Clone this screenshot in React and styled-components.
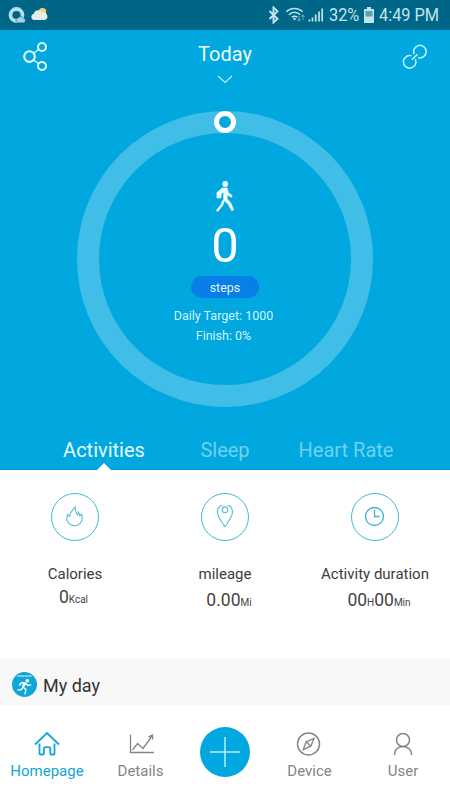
import { useState } from "react";
import styled, { createGlobalStyle } from "styled-components";

const GlobalStyle = createGlobalStyle`
    * {
        box-sizing: border-box;
    }
    body {
        margin: 0;
        background: #FFFFFF;
        font-family: Roboto, sans-serif;
        overflow: hidden;
    }
    svg {
        display: block;
        fill: none;
        flex-shrink: 0;
    }
    button {
        border: none;
        background: none;
        padding: 0;
        font-family: inherit;
    }
`

function StatusBar() {
    return (
        <Status>
            <svg width="48" height="18" viewBox="0 0 48 18">
                <circle cx="8.500" cy="9" r="6" stroke="#B5DDEB" strokeWidth="3.800" />
                <path d="M10 16.800a2.600 2.600 0 0 1 .3-5.100 3.400 3.400 0 0 1 5.400.6 2.300 2.300 0 0 1-.2 4.500z" fill="#A5D2E2" stroke="#006687" strokeWidth=".5" />
                <circle cx="34.500" cy="5.600" r="3.700" fill="#F2D860" />
                <path d="M26.500 14a3.200 3.200 0 0 1-.7-6.300 4.700 4.700 0 0 1 8.600-1.100 3.800 3.800 0 0 1 2.200 7.400z" fill="#E6EBED" />
            </svg>
            <StatusRight>
                <svg width="12" height="18" viewBox="0 0 12 18">
                    <path d="M1.500 5l8 7.700-4 3.800V1.500l4 3.700-8 7.800" stroke="#C0E4EF" strokeWidth="1.900" />
                </svg>
                <svg width="21" height="18" viewBox="0 0 21 18">
                    <path d="M1.500 5.800c4-4.500 12-4.500 16 0M4 8.700c3-3.300 8-3.300 11 0M6.800 11.300c1.500-1.500 4-1.500 5.400 0" stroke="#C0E4EF" strokeWidth="1.600" />
                    <circle cx="9.500" cy="13" r="1.200" fill="#C0E4EF" />
                    <path d="M14 10v5m-1.700-1.700L14 15l1.700-1.700M18 14V9m-1.700 1.700L18 9l1.700 1.700" stroke="#5FA3B9" strokeWidth="1.100" />
                </svg>
                <svg width="16" height="18" viewBox="0 0 16 18">
                    <path d="M1.500 15.500v-2M4.500 15.500v-4M7.700 15.500v-7M11 15.500v-10M14.200 15.500v-13" stroke="#C0E4EF" strokeWidth="1.700" />
                </svg>
                <StatusText $width={35}><span>32%</span></StatusText>
                <svg width="10" height="18" viewBox="0 0 10 18">
                    <path d="M3 1h4v2h3v14H0V3h3z" fill="#C0E4EF" />
                    <path d="M1.500 5h7v5.500h-7z" fill="#5F9FB2" />
                </svg>
                <StatusText $width={60}><span>4:49 PM</span></StatusText>
            </StatusRight>
        </Status>
    );
}

function Header() {
    return (
        <Top>
            <svg width="26" height="30" viewBox="0 0 26 30">
                <g stroke="#E2FAFF">
                    <circle cx="7.500" cy="14.600" r="5.300" strokeWidth="2.100" />
                    <circle cx="20" cy="5" r="4" strokeWidth="2" />
                    <circle cx="20" cy="24" r="4" strokeWidth="2" />
                    <path d="M11.500 11.300l5.300-3.900M11.500 18l5.300 3.700" strokeWidth="1.300" />
                </g>
            </svg>
            <Title>
                <span>Today</span>
                <svg width="16" height="9" viewBox="0 0 16 9">
                    <path d="M1 1l7 6.500L15 1" stroke="#BDF0FB" strokeWidth="1.200" />
                </svg>
            </Title>
            <svg width="26" height="30" viewBox="0 0 26 30">
                <g stroke="#C6F3FC" strokeWidth="1.500">
                    <path d="M12.200 12.300a6.300 6.300 0 1 1 4 3.400" />
                    <path d="M13.400 17.200a6.300 6.300 0 1 1-4-3.400" />
                    <path d="M9.800 17.700l5.800-5.400" />
                </g>
            </svg>
        </Top>
    );
}

function Progress() {
    return (
        <Ring>
            <Knob />
            <svg width="20" height="32" viewBox="-.7 -.5 20 32">
                <circle cx="9.500" cy="3.500" r="2.900" fill="#EDFCFF" />
                <path d="M6.500 7.500h5l1.300 4.800 3.700 2.700-.8 1.800-4.200-2.400v3.800l3.900 4.800 2.700 6.500-2.100.8-3.400-6.300-4.700-4.500V11.500l-2.300 1.700-.3 4.300H1.200V12z" fill="#EDFCFF" stroke="#EDFCFF" strokeWidth=".6" strokeLinejoin="round" />
                <path d="M7.700 20.500l-1.500 4-4.300 5.300" stroke="#EDFCFF" strokeWidth="2.400" strokeLinecap="round" />
            </svg>
            <Count>0</Count>
            <Pill>steps</Pill>
            <Goal>Daily Target: 1000</Goal>
            <Goal>Finish: 0%</Goal>
        </Ring>
    );
}

const tabs = ["Activities", "Sleep", "Heart Rate"];

function Metric({ icon, label, lowered, children }) {
    return (
        <MetricBox>
            <IconCircle>
                <svg width="24" height="24" viewBox="0 0 24 24" stroke="#55BDD3" strokeWidth="1.100">{icon}</svg>
            </IconCircle>
            <Label>{label}</Label>
            <Value $lowered={lowered}>{children}</Value>
        </MetricBox>
    );
}

const flame = <path d="M7.500 19.500C3.500 17 3 13 4.700 9.500c.6 1.400 1.300 1.800 2 1.900C6.500 7.500 9.500 5.200 12.200 2c-.4 3.300 1 5 1.900 7.700.9-.6 1.200-1.400 1.300-2.500 1.200 1.400 1.100 2.300 1.200 3.600 1-.3 1.500-.9 1.900-1.600 1.300 4.300.8 8.300-3.300 10.500-2.400 1.300-5.500 1.100-7.700-.2z" />;
const pin = (
    <>
        <path d="M12 21.800C8.300 16 4.300 11.500 4.300 6.900a7.600 7.600 0 0 1 15.200 0c0 4.600-3.800 9.100-7.500 14.900z" />
        <circle cx="12" cy="4.800" r="2.900" />
    </>
);
const clock = (
    <g stroke="#38B1D0" strokeWidth="1.300">
        <circle cx="11.500" cy="11.500" r="9" />
        <path d="M11.500 5v6.500h5" />
    </g>
);

const menuLeft = [
    {
        name: "Homepage",
        icon: <path d="M1 13.500L13 2l12 11.500M5.500 12.500v10c0 .8.400 1 1 1H9c.7 0 .9-.3.900-1v-4.500c0-1.300.5-1.800 1.700-1.800h3c1.200 0 1.700.5 1.700 1.800v4.500c0 .7.200 1 .9 1h2.300c.7 0 1-.2 1-1v-10" strokeWidth="1.800" />
    },
    {
        name: "Details",
        icon: <path d="M2.500 3.500v18H26M4.500 19l5-6.500 5.500 5L24 5M20.500 5.800L24.500 4l.2 4.500" strokeWidth="1.300" />
    }
];
const menuRight = [
    {
        name: "Device",
        icon: (
            <>
                <circle cx="12.500" cy="13" r="11" strokeWidth="1.500" />
                <path d="M18 7.500l-3.200 7.700-7.600 3.600 3-8zM10.200 10.800l4.600 4.400" strokeWidth="1.300" />
            </>
        )
    },
    {
        name: "User",
        icon: (
            <>
                <circle cx="13" cy="9" r="6.500" strokeWidth="1.500" />
                <path d="M4.500 24c0-11.500 17-11.500 17 0" strokeWidth="1.500" />
            </>
        )
    }
];

function MenuItem({ item, page, setPage }) {
    return (
        <MenuButton $active={page === item.name} onClick={() => setPage(item.name)}>
            <svg width="26" height="26" viewBox="0 0 26 26" stroke="currentColor">{item.icon}</svg>
            <span>{item.name}</span>
        </MenuButton>
    );
}

export default function App() {
    const [tab, setTab] = useState("Activities");
    const [page, setPage] = useState("Homepage");

    return (
        <Screen>
            <GlobalStyle />
            <StatusBar />
            <Hero>
                <Header />
                <Progress />
                <Tabs>
                    {tabs.map((name) => (
                        <Tab key={name} $active={tab === name} onClick={() => setTab(name)}>{name}</Tab>
                    ))}
                </Tabs>
            </Hero>
            <Metrics>
                <Metric icon={flame} label="Calories">0<small>Kcal</small></Metric>
                <Metric icon={pin} label="mileage" lowered>0.00<small>Mi</small></Metric>
                <Metric icon={clock} label="Activity duration" lowered>00<small>H</small>00<small>Min</small></Metric>
            </Metrics>
            <MyDay>
                <svg width="26" height="26" viewBox="0 0 26 26">
                    <circle cx="12.500" cy="12.500" r="12.500" fill="#10A6D8" />
                    <path d="M5.500 4h14" stroke="#BFE8F5" strokeWidth="1.300" strokeDasharray="2 .5" />
                    <circle cx="15.300" cy="8.700" r="1.800" fill="#FFFFFF" />
                    <path d="M7.500 13l2-2.300 4 .2-2.200 4.500 2.700 2-1 4.500M10.500 15.500l-1.400 2.300H5.800M14 11.500l1.700 2 3-.6" stroke="#FFFFFF" strokeWidth="1.300" strokeLinecap="round" strokeLinejoin="round" />
                    <path d="M12.500 11l-1.500 4" stroke="#FFFFFF" strokeWidth="2.400" />
                </svg>
                <span>My day</span>
            </MyDay>
            <Menu>
                {menuLeft.map((item) => <MenuItem key={item.name} item={item} page={page} setPage={setPage} />)}
                <Add aria-label="Add">
                    <svg width="30" height="30" viewBox="0 0 30 30">
                        <path d="M15 0v30M0 15h30" stroke="#BDEFFA" strokeWidth="1.500" />
                    </svg>
                </Add>
                {menuRight.map((item) => <MenuItem key={item.name} item={item} page={page} setPage={setPage} />)}
            </Menu>
        </Screen>
    );
}

const Screen = styled.div`
    width: 450px;
    height: 800px;
    display: flex;
    flex-direction: column;
    background: #FFFFFF;
`

const Status = styled.div`
    height: 30px;
    padding: 0 11px 0 8px;
    display: flex;
    align-items: center;
    justify-content: space-between;
    background: #006687;
`

const StatusRight = styled.div`
    display: flex;
    align-items: center;
    svg + svg {
        margin-left: 5px;
    }
    svg + svg + svg {
        margin-left: 2px;
    }
`

const StatusText = styled.div`
    width: ${props => props.$width}px;
    margin-left: 5px;
    font-size: 19px;
    line-height: 32px;
    color: #C0E4EF;
    white-space: nowrap;
    span {
        display: inline-block;
        transform: scaleX(0.86);
        transform-origin: left center;
    }
`

const Hero = styled.div`
    height: 440px;
    display: flex;
    flex-direction: column;
    align-items: center;
    background: #00A8DF;
    border-bottom: 1px solid #0097C9;
`

const Top = styled.div`
    width: 100%;
    height: 81px;
    flex-shrink: 0;
    padding: 12px 22px 0 22px;
    display: flex;
    justify-content: space-between;
    align-items: flex-start;
`

const Title = styled.div`
    display: flex;
    flex-direction: column;
    align-items: center;
    gap: 9px;
    font-size: 20px;
    line-height: 24px;
    color: #E9FBFF;
`

const Ring = styled.div`
    position: relative;
    width: 296px;
    height: 296px;
    flex-shrink: 0;
    padding-top: 47px;
    display: flex;
    flex-direction: column;
    align-items: center;
    border: 22px solid #40BEE7;
    border-radius: 50%;
`

const Knob = styled.div`
    position: absolute;
    top: -22px;
    left: 115px;
    width: 22px;
    height: 22px;
    border: 5px solid #FFFFFF;
    border-radius: 50%;
    background: #00A8DF;
`

const Count = styled.div`
    margin-top: 5px;
    font-size: 49px;
    line-height: 58px;
    height: 59px;
    color: #FFFFFF;
`

const Pill = styled.div`
    width: 68px;
    height: 22px;
    margin-bottom: 8px;
    border-radius: 11px;
    background: #087FE6;
    color: #DDF6FF;
    font-size: 12.5px;
    line-height: 23px;
    text-align: center;
`

const Goal = styled.div`
    margin-right: 3px;
    font-size: 12.5px;
    line-height: 20px;
    color: #CFF5FD;
    white-space: nowrap;
`

const Tabs = styled.div`
    width: 363px;
    flex: 1;
    margin-top: 23px;
    display: grid;
    grid-template-columns: repeat(3, 1fr);
`

const Tab = styled.button`
    display: flex;
    flex-direction: column;
    align-items: center;
    justify-content: space-between;
    font-size: 20px;
    line-height: 40px;
    height: 39px;
    white-space: nowrap;
    color: ${props => props.$active ? "#E6FBFF" : "#6DD2EF"};
    &::after {
        content: "";
        display: ${props => props.$active ? "block" : "none"};
        width: 14px;
        height: 7px;
        flex-shrink: 0;
        margin: -8px 0 -1px 0;
        background: #FFFFFF;
        clip-path: polygon(50% 0, 100% 100%, 0 100%);
    }
`

const Metrics = styled.div`
    height: 188px;
    padding-top: 23px;
    display: grid;
    grid-template-columns: repeat(3, 1fr);
`

const MetricBox = styled.div`
    display: flex;
    flex-direction: column;
    align-items: center;
`

const IconCircle = styled.div`
    width: 48px;
    height: 48px;
    display: flex;
    align-items: center;
    justify-content: center;
    border: 1px solid #48B9D2;
    border-radius: 50%;
`

const Label = styled.div`
    margin-top: 23px;
    font-size: 15px;
    line-height: 20px;
    color: #3C3C3C;
`

const Value = styled.div`
    margin-top: ${props => props.$lowered ? 5 : 2}px;
    padding-left: ${props => props.$lowered ? 8 : 0}px;
    padding-right: ${props => props.$lowered ? 0 : 3}px;
    font-size: 17.5px;
    line-height: 22px;
    color: #444444;
    small {
        font-size: 10px;
    }
`

const MyDay = styled.div`
    height: 47px;
    padding: 7px 12px 0 12px;
    display: flex;
    align-items: flex-start;
    gap: 5px;
    background: #F8F8F8;
    font-size: 18px;
    line-height: 42px;
    color: #333333;
    svg {
        margin-top: 7px;
    }
`

const Menu = styled.div`
    flex: 1;
    padding-top: 22px;
    display: grid;
    grid-template-columns: 94px 93px 76px 93px 94px;
    justify-items: center;
    align-items: start;
`

const MenuButton = styled.button`
    padding-top: 4px;
    display: flex;
    flex-direction: column;
    align-items: center;
    gap: 4px;
    font-size: 15px;
    line-height: 20px;
    color: ${props => props.$active ? "#12A5D6" : "#858585"};
`

const Add = styled.button`
    width: 50px;
    height: 50px;
    display: flex;
    align-items: center;
    justify-content: center;
    border-radius: 50%;
    background: #00A8DF;
`
